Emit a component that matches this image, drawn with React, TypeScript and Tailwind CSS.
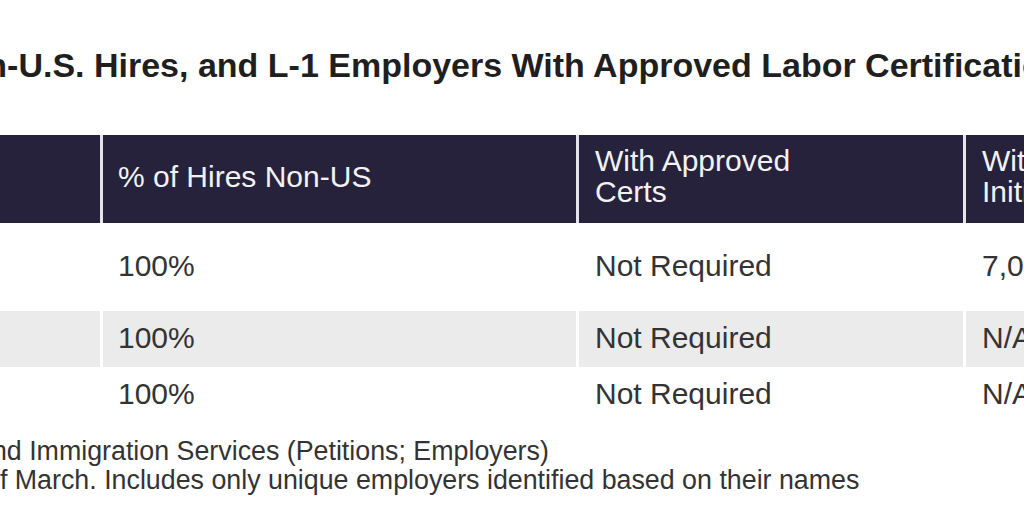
import React from 'react';

const rows = [
  { pct: '100%', certs: 'Not Required', initial: '7,005', h: 'h-[88px]', bg: 'bg-white' },
  { pct: '100%', certs: 'Not Required', initial: 'N/A', h: 'h-[56px]', bg: 'bg-[#ebebeb]' },
  { pct: '100%', certs: 'Not Required', initial: 'N/A', h: 'h-[56px]', bg: 'bg-white' },
];

export default function App() {
  return (
    <div className="w-[1024px] h-[512px] overflow-hidden bg-white font-['Liberation_Sans',Arial,sans-serif]">
      {/* Title */}
      <h1 className="pt-[48px] ml-[-59px] whitespace-nowrap text-[34px] leading-none font-bold text-[#1f1f1f]">
        Non-U.S. Hires, and L-1 Employers With Approved Labor Certification
      </h1>

      {/* Table */}
      <div className="mt-[53px] w-[1300px] text-[30px]">
        <div className="flex h-[88px] bg-[#27223c] text-[#f2f2f4] leading-[31px]">
          <div className="w-[103px] border-r-[3px] border-[#e4e4ea]" />
          <div className="w-[476px] border-r-[3px] border-[#e4e4ea] flex items-center pl-[15px] pb-[6px]">
            % of Hires Non-US
          </div>
          <div className="w-[387px] border-r-[3px] border-[#e4e4ea] flex items-center pl-4 pb-[6px]">
            With Approved<br />Certs
          </div>
          <div className="flex-1 flex items-center pl-4 pb-[6px]">
            With Approved<br />Initial Petitions
          </div>
        </div>

        {rows.map((r, i) => (
          <div key={i} className={`flex ${r.h} ${r.bg} text-[#333333] leading-[31px]`}>
            <div className="w-[103px] border-r-[3px] border-white" />
            <div className="w-[476px] border-r-[3px] border-white flex items-center pl-[15px] pb-1">
              {r.pct}
            </div>
            <div className="w-[387px] border-r-[3px] border-white flex items-center pl-4 pb-1">
              {r.certs}
            </div>
            <div className="flex-1 flex items-center pl-4 pb-1">{r.initial}</div>
          </div>
        ))}
      </div>

      {/* Footnotes */}
      <div className="mt-[14px] text-[26.8px] leading-[29px] text-[#333333] whitespace-nowrap">
        <p className="ml-[-23px]">and Immigration Services (Petitions; Employers)</p>
        <p className="ml-[-15px]">of March. Includes only unique employers identified based on their names</p>
      </div>
    </div>
  );
}
